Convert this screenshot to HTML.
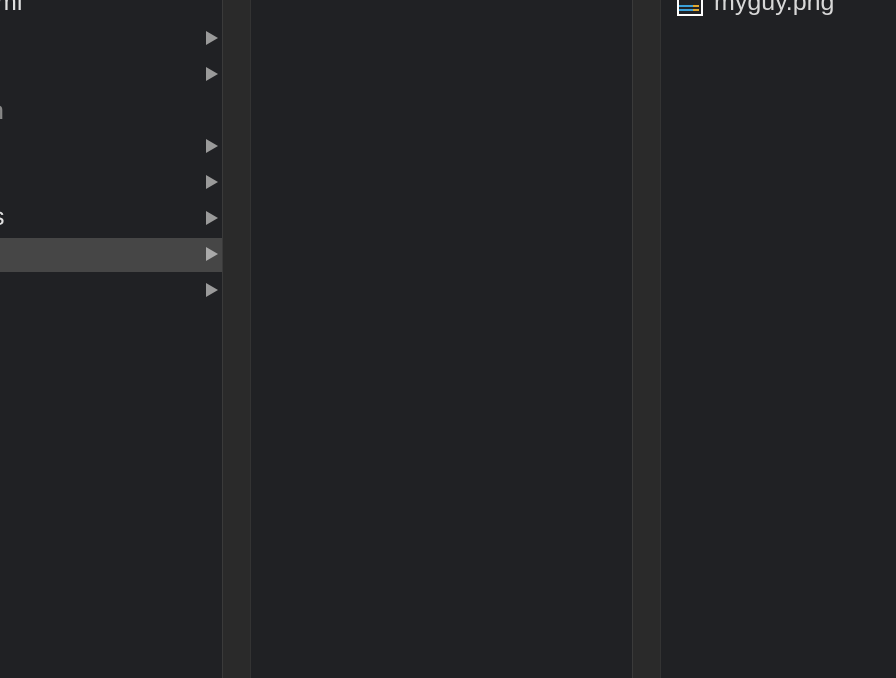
<!DOCTYPE html>
<html><head><style>
body{margin:0;width:896px;height:678px;background:#202124;position:relative;overflow:hidden;font-family:"Liberation Sans",sans-serif;color:#e0e0e0}
.a{position:absolute}
.tri{position:absolute;left:206px;width:0;height:0;border-left:12px solid #9a9a9a;border-top:7px solid transparent;border-bottom:7px solid transparent}
.sb{position:absolute;top:0;height:678px;background:#2a2a2a;border-left:1px solid #3a3a3a;border-right:1px solid #333}
</style></head><body>
<div class="a" style="left:0;top:238px;width:222px;height:34px;background:#464646"></div>
<div class="a" style="left:-4px;top:-12px;font-size:25px">ml</div>
<div class="a" style="left:-10px;top:97px;font-size:25px;color:#888">n</div>
<div class="a" style="left:-8px;top:203px;font-size:25px">s</div>
<div class="tri" style="top:31px"></div>
<div class="tri" style="top:67px"></div>
<div class="tri" style="top:139px"></div>
<div class="tri" style="top:175px"></div>
<div class="tri" style="top:211px"></div>
<div class="tri" style="top:247px;border-left-color:#aaa"></div>
<div class="tri" style="top:283px"></div>
<div class="sb" style="left:222px;width:27px"></div>
<div class="sb" style="left:632px;width:27px"></div>
<div class="a" style="left:677px;top:-4px;width:22px;height:16px;border:2px solid #fff;background:#202124"></div>
<div class="a" style="left:679px;top:5px;width:14px;height:2px;background:#3aa0d8"></div>
<div class="a" style="left:693px;top:5px;width:6px;height:2px;background:#e0a830"></div>
<div class="a" style="left:679px;top:9px;width:14px;height:2px;background:#3aa0d8"></div>
<div class="a" style="left:693px;top:9px;width:6px;height:2px;background:#e0a830"></div>
<div class="a" style="left:714px;top:-12px;font-size:25px;color:#d8d8d8">myguy.png</div>
</body></html>
